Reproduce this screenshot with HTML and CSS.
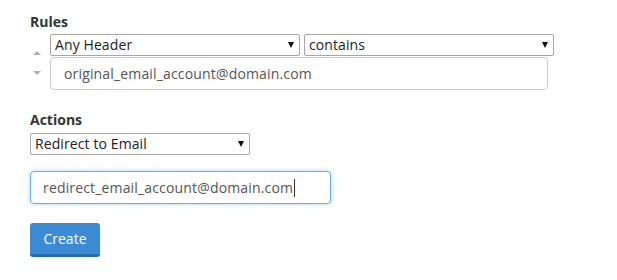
FILE: index.html
```html
<!DOCTYPE html>
<html>
<head>
<meta charset="utf-8">
<link rel="stylesheet" href="styles.css">
</head>
<body>
<div class="page">
  <div class="label">Rules</div>
  <div class="rule">
    <div class="order">
      <span class="arrow up"></span>
      <span class="arrow down"></span>
    </div>
    <div class="rule-fields">
      <div class="selects">
        <div class="select select-rule">
          <select><option>Any Header</option></select>
        </div>
        <div class="select select-rule">
          <select><option>contains</option></select>
        </div>
      </div>
      <input class="text-input rule-value" type="text" value="original_email_account@domain.com">
    </div>
  </div>

  <div class="label label-actions">Actions</div>
  <div class="select select-action">
    <select><option>Redirect to Email</option></select>
  </div>
  <div class="text-input focused"><span>redirect_email_account@domain.com</span><span class="caret"></span></div>
  <button class="btn-primary" type="button">Create</button>
</div>
</body>
</html>
```

FILE: styles.css
```css
* { box-sizing: border-box; }
html, body { margin: 0; padding: 0; background: #fff; }
body {
  font-family: "Open Sans", "Liberation Sans", sans-serif;
  color: #333;
  font-size: 14px;
}
.page {
  padding: 12px 0 0 30px;
}
.label {
  font-weight: 700;
  font-size: 14px;
  line-height: 20px;
  color: #333;
}
.label-actions {
  margin-top: 20px;
}
.rule {
  display: flex;
  margin-top: 2px;
}
.order {
  width: 20px;
  display: flex;
  flex-direction: column;
  align-items: flex-start;
  padding: 17px 0 0 3px;
  gap: 16px;
}
.arrow {
  width: 0;
  height: 0;
  border-left: 4.5px solid transparent;
  border-right: 4.5px solid transparent;
}
.arrow.up { border-bottom: 4px solid #b0b0b0; }
.arrow.down { border-top: 4px solid #b0b0b0; }
.rule-fields {
  display: flex;
  flex-direction: column;
  gap: 1px;
}
.selects {
  display: flex;
  gap: 4px;
}
.select {
  position: relative;
  height: 22px;
}
.select select {
  appearance: none;
  -webkit-appearance: none;
  width: 100%;
  height: 22px;
  margin: 0;
  border: 1px solid #a6a6a6;
  border-radius: 2px;
  background: #fff;
  font-family: "Open Sans", "Liberation Sans", sans-serif;
  font-size: 14px;
  letter-spacing: 0.1px;
  color: #222;
  padding: 0 20px 0 4px;
  line-height: 20px;
}
.select::after {
  content: "";
  position: absolute;
  right: 6px;
  top: 8px;
  width: 0;
  height: 0;
  border-left: 3.5px solid transparent;
  border-right: 3.5px solid transparent;
  border-top: 6px solid #111;
  pointer-events: none;
}
.select-rule { width: 250px; }
.select-action { width: 220px; margin-top: 3px; }
.text-input {
  display: flex;
  align-items: center;
  height: 33px;
  border: 1px solid #ccc;
  border-radius: 4px;
  background: #fff;
  font-family: "Open Sans", "Liberation Sans", sans-serif;
  font-size: 14px;
  letter-spacing: 0.16px;
  color: #555;
  padding: 0 12px;
  margin: 0;
}
.rule-value {
  width: 498px;
  padding-left: 13px;
}
.focused {
  width: 301px;
  margin-top: 16px;
  border-color: #66afe9;
  box-shadow: 0 0 4px rgba(102, 175, 233, 0.55);
}
.caret {
  display: inline-block;
  width: 1px;
  height: 18px;
  background: #333;
  margin-left: 1px;
}
.btn-primary {
  display: block;
  margin-top: 19px;
  width: 70px;
  height: 34px;
  border: none;
  border-bottom: 3px solid #2b6aa8;
  border-radius: 3px;
  background: #3b8bd4;
  color: #fff;
  font-family: "Open Sans", "Liberation Sans", sans-serif;
  font-size: 14px;
  padding: 0;
}
```
